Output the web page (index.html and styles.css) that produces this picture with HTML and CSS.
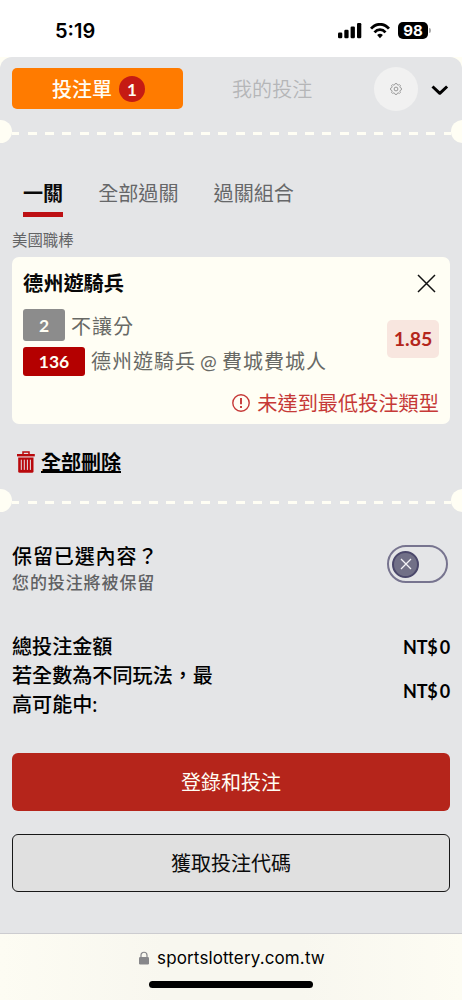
FILE: index.html
```html
<!DOCTYPE html>
<html lang="zh-Hant">
<head>
<meta charset="utf-8">
<meta name="viewport" content="width=device-width, initial-scale=1">
<title>投注單</title>
<link rel="stylesheet" href="styles.css">
</head>
<body>
<div class="phone">
  <header class="status">
    <span class="time">5:19</span>
    <div class="indicators">
      <svg class="signal" width="24" height="16" viewBox="0 0 24 16"><rect x="0" y="9.5" width="4.3" height="5.7" rx="1.2"/><rect x="6.3" y="6.7" width="4.3" height="8.5" rx="1.2"/><rect x="12.6" y="3.5" width="4.3" height="11.7" rx="1.2"/><rect x="19" y="0" width="4.3" height="15.2" rx="1.2"/></svg>
      <svg class="wifi" width="20" height="16" viewBox="0 0 20 16" fill="none" stroke="#000" stroke-width="2.8"><path d="M1 5.7C6-.2 14-.2 19 5.7"/><path d="M4.5 9.4C7.6 5.8 12.4 5.8 15.5 9.4"/><path d="M10 15.2 7.1 12.1Q10 9.5 12.9 12.1Z" fill="#000" stroke="none"/></svg>
      <span class="battery">98</span><span class="cap"></span>
    </div>
  </header>

  <main class="sheet">
    <nav class="top">
      <div class="slip">投注單<span class="count">1</span></div>
      <div class="mine">我的投注</div>
      <div class="gear"><svg width="12" height="12" viewBox="0 0 12 12" fill="none" stroke="#8c8c8c" stroke-width=".9" stroke-linejoin="round"><path d="M4.8 1.6 5.3.5H6.7L7.2 1.6 8.3 2.1 9.4 1.6 10.4 2.6 9.9 3.7 10.4 4.8 11.5 5.3V6.7L10.4 7.2 9.9 8.3 10.4 9.4 9.4 10.4 8.3 9.9 7.2 10.4 6.7 11.5H5.3L4.8 10.4 3.7 9.9 2.6 10.4 1.6 9.4 2.1 8.3 1.6 7.2.5 6.7V5.3L1.6 4.8 2.1 3.7 1.6 2.6 2.6 1.6 3.7 2.1Z"/><circle cx="6" cy="6" r="1.9"/></svg></div>
      <svg class="chevron" width="18" height="12" viewBox="0 0 18 12" fill="none" stroke="#000" stroke-width="3" stroke-linejoin="round"><path d="m1.5 1.5 7.3 6.8 7.3-6.8"/></svg>
    </nav>
    <div class="perforation"><i></i><b></b><i></i></div>

    <nav class="tabs">
      <span class="tab active">一關</span><span class="tab">全部過關</span><span class="tab">過關組合</span>
    </nav>
    <div class="league">美國職棒</div>

    <section class="card">
      <div class="card-head"><h2>德州遊騎兵</h2><svg width="19" height="19" viewBox="0 0 19 19" fill="none" stroke="#111" stroke-width="1.5"><path d="m1 1 17 17M18 1 1 18"/></svg></div>
      <div class="pick">
        <div class="lines">
          <div class="line market"><span class="tag gray">2</span><span>不讓分</span></div>
          <div class="line match"><span class="tag red">136</span><span class="teams">德州遊騎兵 @ 費城費城人</span></div>
        </div>
        <div class="odds">1.85</div>
      </div>
      <div class="warning"><svg width="18" height="18" viewBox="0 0 18 18" fill="none" stroke="#c63937" stroke-width="1.4"><circle cx="9" cy="9" r="8.2"/><path d="M9 4.1v6.2M9 12v2" stroke-width="1.9"/></svg><span>未達到最低投注類型</span></div>
    </section>

    <div class="clear"><svg width="18" height="22" viewBox="0 0 18 22" fill="none" stroke="#b9090d"><path d="M0 4.2h17.8" stroke-width="2.4"/><path d="M6 3V1h6v2" stroke-width="1.5"/><path d="M1.2 6.6h15.3v13.6q0 1.5-1.5 1.5H2.7q-1.5 0-1.5-1.5Z" fill="#b9090d" stroke="none"/><path d="M4.3 8.7v10.2M7.3 8.7v10.2M10.4 8.7v10.2M13.4 8.7v10.2" stroke="#e4e5e7" stroke-width="1"/></svg><span>全部刪除</span></div>
    <div class="perforation"><i></i><b></b><i></i></div>

    <section class="keep">
      <div><h3>保留已選內容？</h3><p>您的投注將被保留</p></div>
      <div class="switch"><span class="knob"><svg width="12" height="12" viewBox="0 0 12 12" stroke="#f3f3f7" stroke-width="1.3"><path d="m1 1 10 10M11 1 1 11"/></svg></span></div>
    </section>

    <section class="totals">
      <div class="row"><span>總投注金額</span><span class="money">NT$ 0</span></div>
      <div class="row"><span class="wrap">若全數為不同玩法，最高可能中:</span><span class="money">NT$ 0</span></div>
    </section>

    <div class="button primary">登錄和投注</div>
    <div class="button secondary">獲取投注代碼</div>
  </main>

  <footer class="browser">
    <div class="address"><svg width="10" height="14" viewBox="0 0 10 14"><path d="M2 7V4.3C2 .2 8 .2 8 4.3V7" fill="none" stroke="#87878a" stroke-width="1.2"/><rect y="6" width="10" height="7.5" rx="1.3" fill="#87878a"/></svg><span>sportslottery.com.tw</span></div>
    <div class="home"></div>
  </footer>
</div>
</body>
</html>
```
FILE: styles.css
```css
* { box-sizing: border-box; }
body { margin: 0; font-family: Lato, "Noto Sans CJK TC", sans-serif; }
h2, h3, p { margin: 0; font-weight: 500; }
svg { display: block; flex: none; }
.phone { width: 462px; height: 1000px; display: flex; flex-direction: column; overflow: hidden; background: linear-gradient(#fff 57px, #fffef4 57px); }

.status { height: 57px; flex: none; display: flex; justify-content: space-between; padding: 20px 31px 0 55px; font-family: Inter, sans-serif; }
.time { font-size: 20px; line-height: 22px; font-weight: 600; letter-spacing: 0; }
.indicators { display: flex; align-items: flex-start; padding-top: 3px; }
.wifi { margin: 0 8px 0 8px; }
.battery { width: 30px; height: 17px; margin-top: -1px; border-radius: 5px; background: #000; color: #fff; font-size: 15px; line-height: 17px; font-weight: 700; text-align: center; }
.cap { width: 2px; height: 5px; margin: 5px 0 0 1px; border-radius: 0 2px 2px 0; background: #aaa; }

.sheet { height: 876px; flex: none; background: #e4e5e7; border-radius: 12px 12px 0 0; }
.top { height: 63px; display: flex; align-items: flex-start; padding: 11px 13px 0 11.5px; }
.slip { width: 171px; height: 41px; display: flex; justify-content: center; align-items: center; gap: 7px; border-radius: 5px; background: #ff7b00; color: #fffdf4; font-size: 20px; font-weight: 500; padding-left: 3px; }
.count { width: 26px; height: 26px; border-radius: 50%; background: #c51b13; line-height: 27px; font-size: 17px; font-weight: 700; text-align: center; }
.mine { margin-left: 49.5px; line-height: 42px; font-size: 20px; color: #b5b6b8; font-weight: 350; width: 81px; letter-spacing: .1px; }
.gear { width: 44px; height: 44px; margin: -1px 0 0 60.5px; display: grid; place-items: center; border-radius: 50%; background: #f1f1f1; }
.chevron { margin: 17px 0 0 13px; }

.perforation { height: 23px; display: flex; overflow: hidden; }
.perforation i { width: 23px; height: 23px; flex: none; border-radius: 50%; background: #fffef4; margin-left: -11.5px; }
.perforation i:last-child { margin: 0 -11.5px 0 0; }
.perforation b { flex: 1; height: 3px; margin-top: 12px; background: repeating-linear-gradient(90deg, #fffef4 0 7.5px, transparent 7.5px 15.6px, #fffef4 15.6px 17.33px); }

.tabs { height: 74px; display: flex; align-items: flex-end; gap: 35px; padding-left: 23px; }
.tab { height: 40px; line-height: 32px; font-size: 20.1px; color: #666769; font-weight: 400; }
.active { color: #090909; font-weight: 700; border-bottom: 5px solid #bd1014; }
.league { height: 40px; padding: 12px 0 0 12px; line-height: 23px; font-size: 15.4px; color: #626365; }

.card { height: 167px; margin: 0 12px; border-radius: 7px; padding: 0 11px; background: #fffef4; }
.card-head { height: 51px; display: flex; justify-content: space-between; align-items: center; padding: 2px 3px 0 0; }
h2 { font-size: 20.2px; line-height: 29px; color: #080808; font-weight: 700; }
.pick { height: 71px; display: flex; justify-content: space-between; }
.line { display: flex; align-items: center; gap: 6px; color: #686965; font-size: 20px; line-height: 30px; letter-spacing: 1px; word-spacing: -2px; white-space: nowrap; }
.line span:last-child { padding-top: 2px; }
.market { height: 34px; }
.match { height: 38px; }
.line .teams:last-child { padding-top: 0; }
.tag { border-radius: 3px; color: #fffef4; font-size: 17.5px; font-weight: 700; text-align: center; letter-spacing: 0; }
.gray { width: 42px; height: 32px; line-height: 33px; background: #8c8c8c; }
.red { width: 62px; height: 29px; line-height: 30px; background: #b40000; }
.odds { width: 52px; height: 38px; margin-top: 12px; border-radius: 5px; background: #f8e6df; color: #b4261b; font-size: 19.5px; line-height: 38px; font-weight: 700; text-align: center; }
.warning { height: 45px; display: flex; align-items: center; justify-content: flex-end; gap: 7px; padding: 2px 0 0 0; color: #c63937; font-size: 20.2px; line-height: 30px; }

.clear { height: 65px; display: flex; gap: 6px; padding: 27px 0 0 17px; font-size: 20px; line-height: 22px; font-weight: 700; text-decoration: underline; text-decoration-thickness: 1.5px; text-underline-offset: 1px; }

.keep { height: 119px; display: flex; justify-content: space-between; padding: 28px 14px 0 12px; }
h3 { font-size: 20px; line-height: 32px; letter-spacing: .9px; }
.keep p { font-size: 17px; line-height: 22px; letter-spacing: .9px; color: #606163; }
.switch { width: 61px; height: 38px; margin-top: 5px; padding: 3.5px 3px; border: 2px solid #77748f; border-radius: 19px; }
.knob { width: 27px; height: 27px; display: grid; place-items: center; border: 2px solid #4b486b; border-radius: 50%; background: #717087; }

.totals { height: 122px; padding: 1px 12px 0; }
.row { display: flex; justify-content: space-between; align-items: center; font-size: 20.1px; line-height: 29px; font-weight: 500; }
.wrap { width: 205px; }
.money { font-size: 18px; font-weight: 700; letter-spacing: -.2px; word-spacing: -2px; padding-top: 2px; line-height: 27px; }
.button { height: 58px; margin: 0 12px; border-radius: 6px; text-align: center; line-height: 59px; font-size: 20px; }
.primary { color: #fffdf4; background: #b5251b; }
.secondary { margin-top: 23px; border: 1.5px solid #181818; color: #0b0b0b; background: #e0e0e0; line-height: 57px; }

.browser { flex: 1; border-top: 1px solid #ccccd0; background: linear-gradient(90deg, #fdfcf3, #f8f7ef 35%, #f8f7ef 65%, #fdfcf3); display: flex; flex-direction: column; align-items: center; }
.address { height: 47px; display: flex; align-items: center; gap: 8px; padding-left: 2px; font-family: Inter, sans-serif; font-size: 17px; letter-spacing: .13px; }
.home { width: 164px; height: 7px; border-radius: 4px; background: #000; }
```
